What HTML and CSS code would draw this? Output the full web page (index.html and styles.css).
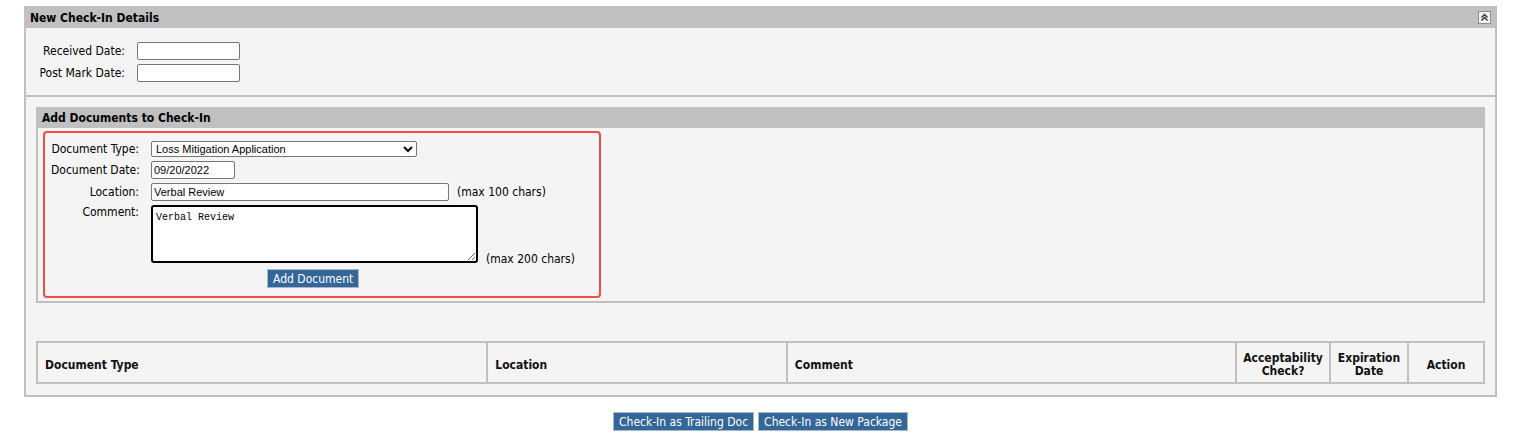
FILE: index.html
```html
<!DOCTYPE html>
<html>
<head>
<meta charset="utf-8">
<link rel="stylesheet" href="styles.css">
</head>
<body>
<div class="page">
  <div class="panel">
    <div class="panel-header">
      <span>New Check-In Details</span>
      <span class="collapse">
        <svg width="13" height="13" viewBox="0 0 13 13">
          <rect x="0.5" y="0.5" width="12" height="12" fill="#f0f0f0" stroke="#8a8f99"/>
          <path d="M3.5 6.5 L6.5 3.5 L9.5 6.5 M3.5 9.5 L6.5 6.5 L9.5 9.5" fill="none" stroke="#333" stroke-width="1.4"/>
        </svg>
      </span>
    </div>
    <div class="dates">
      <label class="lbl">Received Date:</label>
      <input class="date-input" type="text">
      <label class="lbl">Post Mark Date:</label>
      <input class="date-input" type="text">
    </div>
    <div class="docs-area">
      <div class="inner-panel">
        <div class="inner-header">Add Documents to Check-In</div>
        <div class="highlight">
          <div class="doc-form">
            <label class="flbl">Document Type:</label>
            <div class="field">
              <select class="doc-select"><option>Loss Mitigation Application</option></select>
            </div>
            <label class="flbl">Document Date:</label>
            <div class="field"><input class="txt date" type="text" value="09/20/2022"></div>
            <label class="flbl">Location:</label>
            <div class="field"><input class="txt loc" type="text" value="Verbal Review"><span class="hint">(max 100 chars)</span></div>
            <label class="flbl top">Comment:</label>
            <div class="field bottom"><textarea class="comment">Verbal Review</textarea><span class="hint">(max 200 chars)</span></div>
            <span></span>
            <div class="field"><button class="btn add">Add Document</button></div>
          </div>
        </div>
      </div>
      <table class="docs-table">
        <tr>
          <th class="c-type">Document Type</th>
          <th class="c-loc">Location</th>
          <th class="c-com">Comment</th>
          <th class="c-acc center">Acceptability Check?</th>
          <th class="c-exp center">Expiration Date</th>
          <th class="c-act center">Action</th>
        </tr>
      </table>
    </div>
  </div>
  <div class="actions">
    <button class="btn">Check-In as Trailing Doc</button>
    <button class="btn">Check-In as New Package</button>
  </div>
</div>
</body>
</html>
```

FILE: styles.css
```css
* { box-sizing: border-box; }
body {
  margin: 0;
  background: #fff;
  font-family: "DejaVu Sans Condensed", "DejaVu Sans", sans-serif;
  font-stretch: condensed;
  font-size: 12px;
  color: #000;
}
.page {
  padding-top: 6px;
  padding-left: 24px;
  width: 1497px;
}
.panel {
  border: 2px solid #c0c0c0;
  border-top: 0;
  background: #f4f4f4;
}
.panel-header {
  background: #c0c0c0;
  height: 22px;
  display: flex;
  align-items: center;
  justify-content: space-between;
  padding: 1px 4px 0 4px;
  font-weight: bold;
}
.collapse { display: flex; }
.dates {
  display: grid;
  grid-template-columns: 86px 103px;
  column-gap: 12px;
  row-gap: 4px;
  align-items: center;
  padding: 14px 0 13px 13px;
  border-bottom: 2px solid #c0c0c0;
}
.lbl { text-align: right; white-space: nowrap; }
.date-input {
  height: 18px;
  width: 103px;
  border: 1px solid #767676;
  border-radius: 2px;
  background: #fff;
  margin: 0;
}
.docs-area { padding: 10px 10px 11px 10px; }
.inner-panel {
  border: 2px solid #c0c0c0;
  border-top: 0;
  padding: 0 3px 3px 5px;
}
.inner-header {
  background: #c0c0c0;
  height: 21px;
  margin: 0 -3px 3px -5px;
  padding-left: 4px;
  display: flex;
  align-items: center;
  font-weight: bold;
}
.highlight {
  width: 558px;
  border: 2px solid #f44a4a;
  border-radius: 4px;
  padding: 8px 0 8px 6px;
}
.doc-form {
  display: grid;
  grid-template-columns: 88px auto;
  column-gap: 12px;
  row-gap: 4px;
  align-items: center;
}
.flbl { text-align: right; white-space: nowrap; }
.flbl.top { align-self: start; padding-top: 0; }
.field { display: flex; align-items: center; }
.field.bottom { align-items: flex-end; }
.doc-select {
  width: 266px;
  height: 16px;
  font-family: "Liberation Sans", Arial, sans-serif;
  font-size: 11px;
  border: 1px solid #767676;
  border-radius: 2px;
  background: #fff;
  padding: 0;
  margin: 0;
}
.txt {
  height: 18px;
  border: 1px solid #767676;
  border-radius: 2px;
  background: #fff;
  font-family: "Liberation Sans", Arial, sans-serif;
  font-size: 11px;
  padding: 0 2px;
  margin: 0;
}
.txt.date { width: 84px; }
.txt.loc { width: 298px; }
.hint { margin-left: 8px; white-space: nowrap; }
.comment {
  width: 327px;
  height: 58px;
  border: 2px solid #000;
  border-radius: 3px;
  font-family: "Liberation Mono", monospace;
  font-size: 10px;
  padding: 5px 3px;
  margin: 0;
  resize: both;
  background: #fff;
}
.field.bottom .hint { margin-bottom: -3px; }
.btn {
  background: #336699;
  color: #fff;
  border: 1px solid #a9b8c8;
  font-family: "DejaVu Sans Condensed", "DejaVu Sans", sans-serif;
  font-stretch: condensed;
  font-size: 12px;
  height: 19px;
  padding: 0 5px;
  margin: 0;
  cursor: pointer;
}
.btn.add { margin-top: 2px; margin-left: 116px; }
.docs-table {
  margin-top: 38px;
  width: 100%;
  border-collapse: collapse;
  border: 2px solid #c0c0c0;
}
.docs-table th {
  border: 2px solid #c0c0c0;
  height: 41px;
  text-align: left;
  padding: 5px 7px 0 7px;
  font-weight: bold;
  line-height: 13px;
  color: #111;
}
.docs-table th.center { text-align: center; padding: 5px 4px 0 4px; }
.c-type { width: 451px; }
.c-loc { width: 300px; }
.c-com { width: 450px; }
.c-acc { width: 94px; }
.c-exp { width: 78px; }
.c-act { width: 76px; }
.actions {
  display: flex;
  justify-content: center;
  gap: 4px;
  margin-top: 15px;
}
```
